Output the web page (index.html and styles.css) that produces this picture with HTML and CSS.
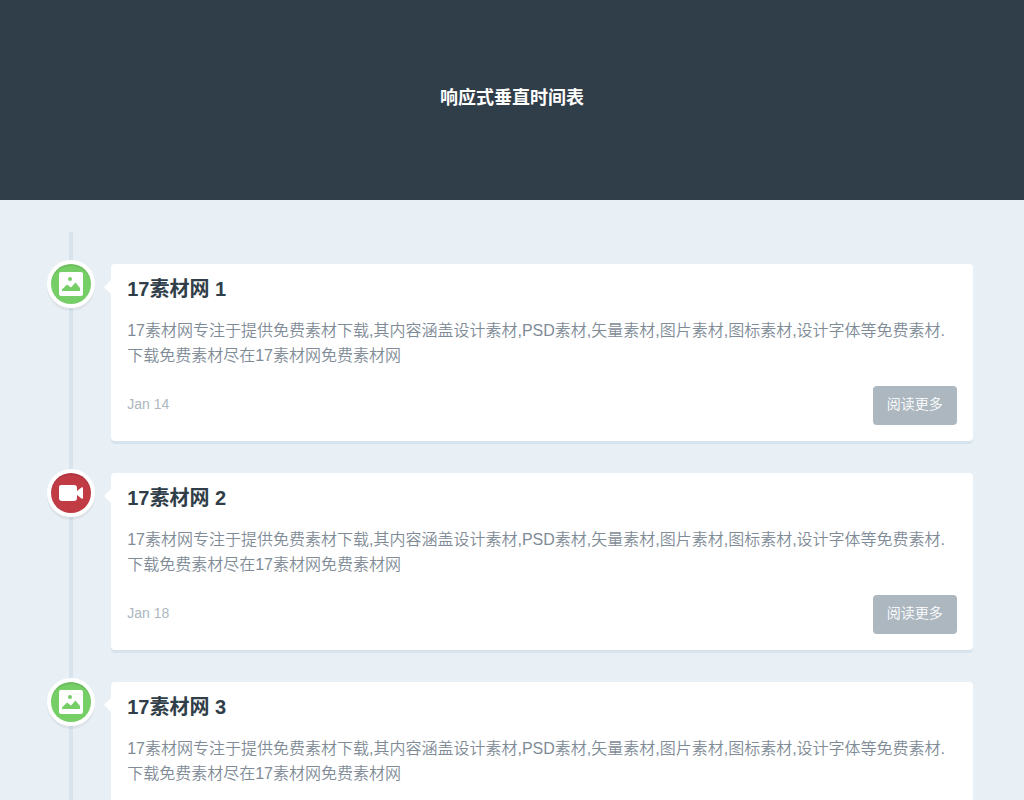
FILE: index.html
```html
<!DOCTYPE html>
<html lang="zh-CN">
<head>
<meta charset="utf-8">
<meta name="viewport" content="width=device-width, initial-scale=1">
<title>响应式垂直时间表</title>
<link rel="stylesheet" href="styles.css">
</head>
<body>
<svg width="0" height="0" class="sprite" aria-hidden="true">
  <symbol id="picture" viewBox="0 0 24 24">
    <path fill="#fff" fill-rule="evenodd" d="M2 0H22Q24 0 24 2V22Q24 24 22 24H2Q0 24 0 22V2Q0 0 2 0ZM11 5A2 2 0 0 0 11 9A2 2 0 0 0 11 5ZM3 19H21V16L16.5 10.5L12 15.5L8 12.5L3 17.5Z"/>
  </symbol>
  <symbol id="movie" viewBox="0 0 24 24">
    <path fill="#fff" d="M2 4H15Q18 4 18 7V10L22.5 6.5Q24 6 24 7V17Q24 18 22.5 17.5L18 14V17Q18 20 15 20H3Q0 20 0 17V6Q0 4 2 4Z"/>
  </symbol>
</svg>
<header class="page-header">
  <h1>响应式垂直时间表</h1>
</header>
<main class="timeline">
  <article class="item">
    <div class="marker green"><svg class="icon" aria-hidden="true"><use href="#picture"/></svg></div>
    <div class="card">
      <h2>17素材网 1</h2>
      <p>17素材网专注于提供免费素材下载,其内容涵盖设计素材,PSD素材,矢量素材,图片素材,图标素材,设计字体等免费素材.下载免费素材尽在17素材网免费素材网</p>
      <footer class="card-foot"><span class="date">Jan 14</span><a class="more" href="#">阅读更多</a></footer>
    </div>
  </article>
  <article class="item">
    <div class="marker red"><svg class="icon" aria-hidden="true"><use href="#movie"/></svg></div>
    <div class="card">
      <h2>17素材网 2</h2>
      <p>17素材网专注于提供免费素材下载,其内容涵盖设计素材,PSD素材,矢量素材,图片素材,图标素材,设计字体等免费素材.下载免费素材尽在17素材网免费素材网</p>
      <footer class="card-foot"><span class="date">Jan 18</span><a class="more" href="#">阅读更多</a></footer>
    </div>
  </article>
  <article class="item">
    <div class="marker green"><svg class="icon" aria-hidden="true"><use href="#picture"/></svg></div>
    <div class="card">
      <h2>17素材网 3</h2>
      <p>17素材网专注于提供免费素材下载,其内容涵盖设计素材,PSD素材,矢量素材,图片素材,图标素材,设计字体等免费素材.下载免费素材尽在17素材网免费素材网</p>
      <footer class="card-foot"><span class="date">Jan 24</span><a class="more" href="#">阅读更多</a></footer>
    </div>
  </article>
</main>
</body>
</html>
```
FILE: styles.css
```css
* {
  box-sizing: border-box;
}

html {
  scrollbar-width: none;
}

body {
  margin: 0;
  background: #e9f0f5;
  color: #7f8c97;
  font: 350 16px/25px "Liberation Sans", "Noto Sans CJK SC", sans-serif;
}

h1,
h2,
p {
  margin: 0;
}

.sprite {
  position: absolute;
}

.page-header {
  display: flex;
  align-items: center;
  justify-content: center;
  height: 200px;
  padding-bottom: 4px;
  background: #303e49;
}

.page-header h1 {
  color: #fff;
  font-size: 18px;
  font-weight: 700;
}

.timeline {
  position: relative;
  display: grid;
  gap: 32px;
  width: 90%;
  margin: 32px auto;
  padding: 32px 0;
}

.timeline::before {
  content: "";
  position: absolute;
  top: 0;
  left: 18px;
  width: 4px;
  height: 100%;
  background: #d7e4ed;
}

.item {
  display: flex;
  align-items: flex-start;
  gap: 20px;
}

.marker {
  position: relative;
  display: grid;
  flex: none;
  place-items: center;
  width: 40px;
  height: 40px;
  border-radius: 50%;
  box-shadow: 0 0 0 4px #fff, inset 0 2px 0 rgba(0, 0, 0, 0.08), 0 3px 0 4px rgba(0, 0, 0, 0.05);
}

.green {
  background: #75ce66;
}

.red {
  background: #c03b44;
}

.icon {
  width: 24px;
  height: 24px;
}

.card {
  position: relative;
  flex: 1;
  min-width: 0;
  padding: 12px 16px 16px;
  border-radius: 4px;
  background: #fff;
  box-shadow: 0 3px 0 #d7e4ed;
}

.card::before {
  content: "";
  position: absolute;
  top: 16px;
  right: 100%;
  border: 7px solid transparent;
  border-left-width: 0;
  border-right-color: #fff;
}

.card h2 {
  color: #303e49;
  font-size: 20px;
  line-height: 26px;
}

.card p {
  margin: 16px 0 18px;
}

.card-foot {
  display: flex;
  align-items: flex-start;
  justify-content: space-between;
  font-size: 14px;
}

.date {
  padding: 6px 0;
  color: #acb7c0;
}

.more {
  padding: 6px 14px 8px;
  border-radius: 4px;
  background: #acb7c0;
  color: #fff;
  text-decoration: none;
}
```
